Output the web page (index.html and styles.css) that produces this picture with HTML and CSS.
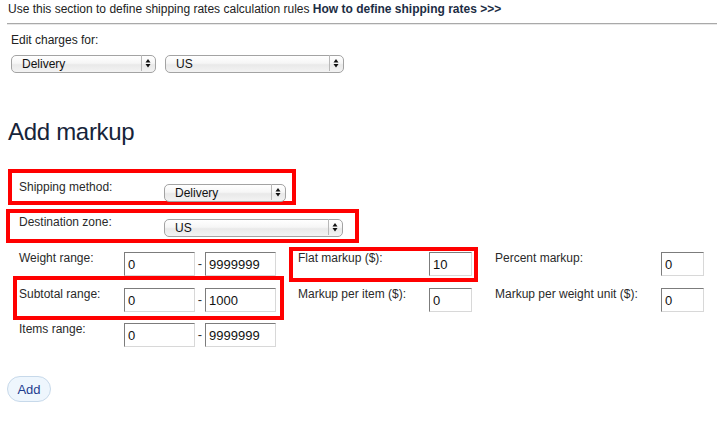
FILE: index.html
```html
<!DOCTYPE html>
<html>
<head>
<meta charset="utf-8">
<link rel="stylesheet" href="styles.css">
</head>
<body>
<p class="intro">Use this section to define shipping rates calculation rules <a class="help" href="#">How to define shipping rates &gt;&gt;&gt;</a></p>
<hr class="rule">
<div class="edit">
  <div class="edit-label">Edit charges for:</div>
  <div class="edit-row">
    <span class="sel w145"><select><option>Delivery</option></select><svg viewBox="0 0 15 18"><line x1="0.5" y1="1" x2="0.5" y2="17" stroke="#b8b8b8"/><polygon points="4.5,8.5 9.5,8.5 7,5" fill="#111"/><polygon points="4.5,10 9.5,10 7,13.5" fill="#111"/></svg></span>
    <span class="sel w179"><select><option>US</option></select><svg viewBox="0 0 15 18"><line x1="0.5" y1="1" x2="0.5" y2="17" stroke="#b8b8b8"/><polygon points="4.5,8.5 9.5,8.5 7,5" fill="#111"/><polygon points="4.5,10 9.5,10 7,13.5" fill="#111"/></svg></span>
  </div>
</div>
<h1 class="title">Add markup</h1>
<div class="hl hl-method">
  <span class="lbl">Shipping method:</span>
  <span class="sel w122"><select><option>Delivery</option></select><svg viewBox="0 0 15 18"><line x1="0.5" y1="1" x2="0.5" y2="17" stroke="#b8b8b8"/><polygon points="4.5,8.5 9.5,8.5 7,5" fill="#111"/><polygon points="4.5,10 9.5,10 7,13.5" fill="#111"/></svg></span>
</div>
<div class="hl hl-zone">
  <span class="lbl">Destination zone:</span>
  <span class="sel w179"><select><option>US</option></select><svg viewBox="0 0 15 18"><line x1="0.5" y1="1" x2="0.5" y2="17" stroke="#b8b8b8"/><polygon points="4.5,8.5 9.5,8.5 7,5" fill="#111"/><polygon points="4.5,10 9.5,10 7,13.5" fill="#111"/></svg></span>
</div>
<div class="grid">
  <span class="lbl">Weight range:</span>
  <input class="inp" value="0">
  <span class="dash">-</span>
  <input class="inp" value="9999999">
  <span class="lbl pad1">Flat markup ($):</span>
  <input class="inp" value="10">
  <span class="lbl pad2">Percent markup:</span>
  <input class="inp" value="0">

  <span class="lbl">Subtotal range:</span>
  <input class="inp" value="0">
  <span class="dash">-</span>
  <input class="inp" value="1000">
  <span class="lbl pad1">Markup per item ($):</span>
  <input class="inp" value="0">
  <span class="lbl pad2">Markup per weight unit ($):</span>
  <input class="inp" value="0">

  <span class="lbl">Items range:</span>
  <input class="inp" value="0">
  <span class="dash">-</span>
  <input class="inp" value="9999999">

  <span class="mark mark-subtotal"></span>
  <span class="mark mark-flat"></span>
</div>
<button class="add">Add</button>
</body>
</html>
```
FILE: styles.css
```css
body {
  margin: 0;
  font-family: "Liberation Sans", Arial, sans-serif;
  color: #222;
  background: #fff;
}
.intro {
  margin: 0;
  padding: 1px 8px 0;
  font-size: 12px;
  line-height: 16px;
  color: #222;
  white-space: nowrap;
}
.help {
  color: #1c2d44;
  font-weight: bold;
  text-decoration: none;
}
.rule {
  margin: 6px 0 0 7px;
  border: 0;
  border-top: 1px solid #a9a9a9;
  border-bottom: 1px solid #e8e8e8;
  height: 0;
}
.edit {
  padding: 8px 0 0 11px;
}
.edit-label {
  font-size: 12px;
  line-height: 15px;
  color: #222;
}
.edit-row {
  display: flex;
  gap: 9px;
  margin-top: 6px;
}
.sel {
  position: relative;
  display: inline-block;
  height: 18px;
  flex: none;
}
.sel select {
  -webkit-appearance: none;
  appearance: none;
  box-sizing: border-box;
  width: 100%;
  height: 100%;
  margin: 0;
  padding: 0 0 0 10px;
  border: 1px solid #a3a3a3;
  border-radius: 5px;
  background: linear-gradient(to bottom, #ffffff 0%, #f6f6f6 45%, #e9e9e9 55%, #f3f3f3 100%);
  font: 12px "Liberation Sans", Arial, sans-serif;
  color: #111;
  line-height: 16px;
}
.sel svg {
  position: absolute;
  right: 0;
  top: 0;
  width: 15px;
  height: 18px;
  pointer-events: none;
}
.w145 { width: 145px; }
.w179 { width: 179px; }
.w122 { width: 122px; }
.title {
  margin: 46px 0 0 8px;
  font-size: 24px;
  line-height: 28px;
  font-weight: normal;
  color: #16243a;
  letter-spacing: -0.3px;
}
.lbl {
  font-size: 12px;
  line-height: 15px;
  color: #2a2a2a;
  white-space: nowrap;
}
.hl {
  box-sizing: border-box;
  border: 4px solid #f00;
  display: flex;
  align-items: flex-start;
}
.hl .lbl {
  width: 145px;
  flex: none;
  margin-top: -3px;
}
.hl-method {
  width: 288px;
  height: 36px;
  margin: 23px 0 0 8px;
  padding: 10px 0 0 7px;
}
.hl-zone {
  width: 353px;
  height: 34px;
  margin: 4px 0 0 6px;
  padding: 5px 0 0 9px;
}
.grid {
  position: relative;
  display: grid;
  grid-template-columns: 105px 71px 10px 71px 153px 43px 189px 43px;
  grid-template-rows: 36px 35px 24px;
  align-items: start;
  margin-top: 9px;
  padding-left: 19px;
}
.grid .lbl {
  margin-top: -1px;
}
.pad1 { padding-left: 22px; }
.pad2 { padding-left: 23px; }
.inp {
  box-sizing: border-box;
  width: 100%;
  height: 24px;
  margin: 0;
  padding: 0 0 0 3px;
  border: 1px solid;
  border-color: #7c7c7c #d8d8d8 #d8d8d8 #7c7c7c;
  background: #fff;
  font: 13px "Liberation Sans", Arial, sans-serif;
  color: #111;
}
.dash {
  text-align: center;
  font-size: 13px;
  line-height: 24px;
  color: #333;
}
.mark {
  position: absolute;
  border: 4px solid #f00;
  pointer-events: none;
}
.mark-subtotal {
  left: 13px;
  top: 24px;
  width: 263px;
  height: 36px;
}
.mark-flat {
  left: 289px;
  top: -5px;
  width: 181px;
  height: 27px;
}
.add {
  display: block;
  margin: 29px 0 0 7px;
  width: 44px;
  height: 26px;
  padding: 0;
  border: 1px solid #c7d9ea;
  border-radius: 13px;
  background: #eef6fd;
  color: #1e3c8f;
  font: 13px "Liberation Sans", Arial, sans-serif;
}
```
